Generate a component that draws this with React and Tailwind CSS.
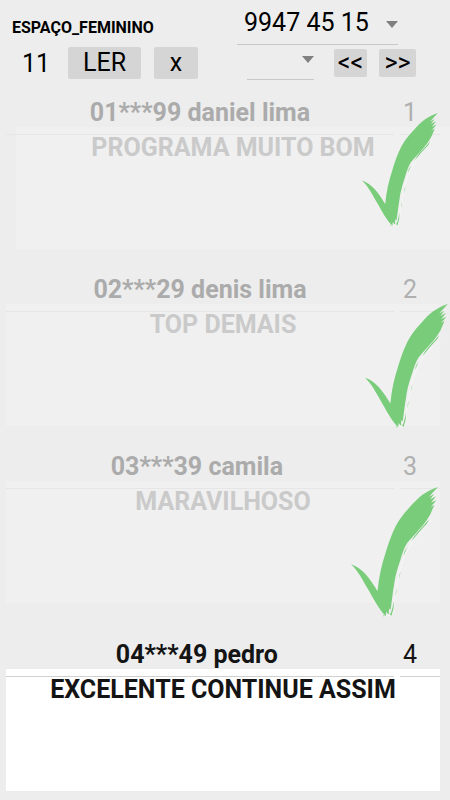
import clsx from 'clsx'

const messages = [
  { id: 1, name: '01***99 daniel lima', text: 'PROGRAMA MUITO BOM', read: true,  item: 'mb-[27px]', box: 'ml-2.5 -mr-2.5', check: 'top-[14px] right-0.5 w-[76px]' },
  { id: 2, name: '02***29 denis lima',  text: 'TOP DEMAIS',         read: true,  item: 'mb-[27px]', box: '',               check: 'top-7 -right-2 w-[83px]' },
  { id: 3, name: '03***39 camila ',     text: 'MARAVILHOSO',        read: true,  item: 'mb-[38px]', box: '',               check: 'top-[34px] right-0.5 w-[87px]' },
  { id: 4, name: '04***49 pedro ',      text: 'EXCELENTE CONTINUE ASSIM', read: false, item: 'mb-2', box: '',             check: '' },
]

function CheckMark({ className }) {
  return (
    <svg viewBox="0 0 262 391" className={className} fill="#78cc7a" aria-hidden="true">
      {/* white edge left by the brush */}
      <path
        d="M66 330 C78 354 92 374 108 388 L124 384 L128 362 M240 100 C200 140 170 180 154 228 C141 270 134 320 128 366"
        fill="none" stroke="#f6f8f6" strokeWidth="3"
      />
      <path d="M0 233 C34 244 57 276 80 314 C84 272 92 235 104 199 C112 172 122 143 134 119 C145 98 158 81 174 64 C187 49 200 35 214 24 C230 13 246 5 262 0 L254 8 L234 30 L250 21 L238 38 L256 28 L241 47 L257 40 L240 60 L251 54 L243 72 L239 82 C229 99 218 115 204 129 C193 143 180 155 169 169 C160 184 154 201 149 219 C142 239 136 259 132 279 C128 302 125 326 122 349 L119 370 L115 366 L113 384 L106 376 L105 389 C82 367 67 334 50 306 C35 281 21 252 0 233 Z" />
      <path d="M235 97 L229 110 L217 123 L204 137 L192 152 L181 165 L189 151 L202 134 L219 116 Z" />
      <path d="M171 180 L164 194 L158 208 L161 195 Z M150 252 L147 266 L144 278 L146 264 Z M138 304 L136 319 L134 330 L135 316 Z" />
      <path d="M130 342 L128 366 L122 388 L115 381 L120 381 L125 364 Z M97 385 L101 388 L99 391 Z" />
    </svg>
  )
}

function Dropdown({ label, options, className }) {
  return (
    <div className={clsx('relative border-b border-[#c8c8c8]', className)}>
      <select
        aria-label={label}
        className="block w-full h-full appearance-none bg-transparent pt-0.5 pl-[7px] text-[25px] leading-8 text-black outline-none"
      >
        {options.map((option) => <option key={option}>{option}</option>)}
      </select>
      <svg viewBox="0 0 12 7" className="pointer-events-none absolute right-0 bottom-4 w-3" fill="#808080" aria-hidden="true">
        <path d="M0 0h12L6 7z" />
      </svg>
    </div>
  )
}

function HeaderButton({ children, className, label }) {
  return (
    <button
      type="button"
      aria-label={label}
      className={clsx('flex items-center justify-center rounded-xs bg-[#d5d5d5] text-[25px] text-black', className)}
    >
      {children}
    </button>
  )
}

function Message({ id, name, text, read, item, box, check }) {
  return (
    <li className={clsx('relative', item)}>
      <div className="relative z-10 flex gap-1.5">
        <input
          aria-label="Nome"
          defaultValue={name}
          className={clsx(
            'h-9 min-w-0 flex-1 border-b bg-transparent pb-2 text-center text-[25px] font-bold outline-none',
            read ? 'border-[#e6e6e6] text-[#ababab]' : 'border-[#d0d0d0] text-[#141414]'
          )}
        />
        <input
          aria-label="Número"
          defaultValue={id}
          className={clsx(
            'h-9 w-10 border-b bg-transparent pb-2 pl-[3px] text-[25px] outline-none',
            read ? 'border-[#e6e6e6] text-[#b0b0b0]' : 'border-[#d0d0d0] text-[#141414]'
          )}
        />
      </div>
      <p
        className={clsx(
          '-mt-2 min-h-[122px] pt-[5px] text-center text-[25px] leading-8 font-bold',
          read ? 'bg-[#f0f0f0] text-[#cacaca]' : 'bg-white text-[#141414]',
          box
        )}
      >
        {text}
      </p>
      {read && <CheckMark className={clsx('absolute z-20', check)} />}
    </li>
  )
}

export default function App() {
  return (
    <div className="min-h-screen overflow-hidden bg-[#ededed] font-['Roboto',sans-serif]">
      <header>
        <div className="flex items-start justify-between pl-3 pr-[52px]">
          <h1 className="pt-[18px] text-base leading-5 font-bold text-black">ESPAÇO_FEMININO</h1>
          <Dropdown label="Número" options={['9947 45 15']} className="h-[45px] w-[161px]" />
        </div>
        <div className="flex h-[35px] items-center pl-[22px] pr-[34px]">
          <span className="w-[46px] pt-0.5 text-[25px] leading-8 text-black">11</span>
          <HeaderButton className="h-8 w-[73px]">LER</HeaderButton>
          <HeaderButton className="ml-[13px] h-8 w-11" label="Fechar">x</HeaderButton>
          <Dropdown label="Filtro" options={['']} className="ml-auto h-[35px] w-[67px]" />
          <HeaderButton className="ml-5 h-7 w-[33px]" label="Anterior">&lt;&lt;</HeaderButton>
          <HeaderButton className="ml-3 h-7 w-[37px]" label="Próximo">&gt;&gt;</HeaderButton>
        </div>
      </header>
      <ul className="pt-[19px] pl-1.5 pr-2.5">
        {messages.map((message) => <Message key={message.id} {...message} />)}
      </ul>
    </div>
  )
}
